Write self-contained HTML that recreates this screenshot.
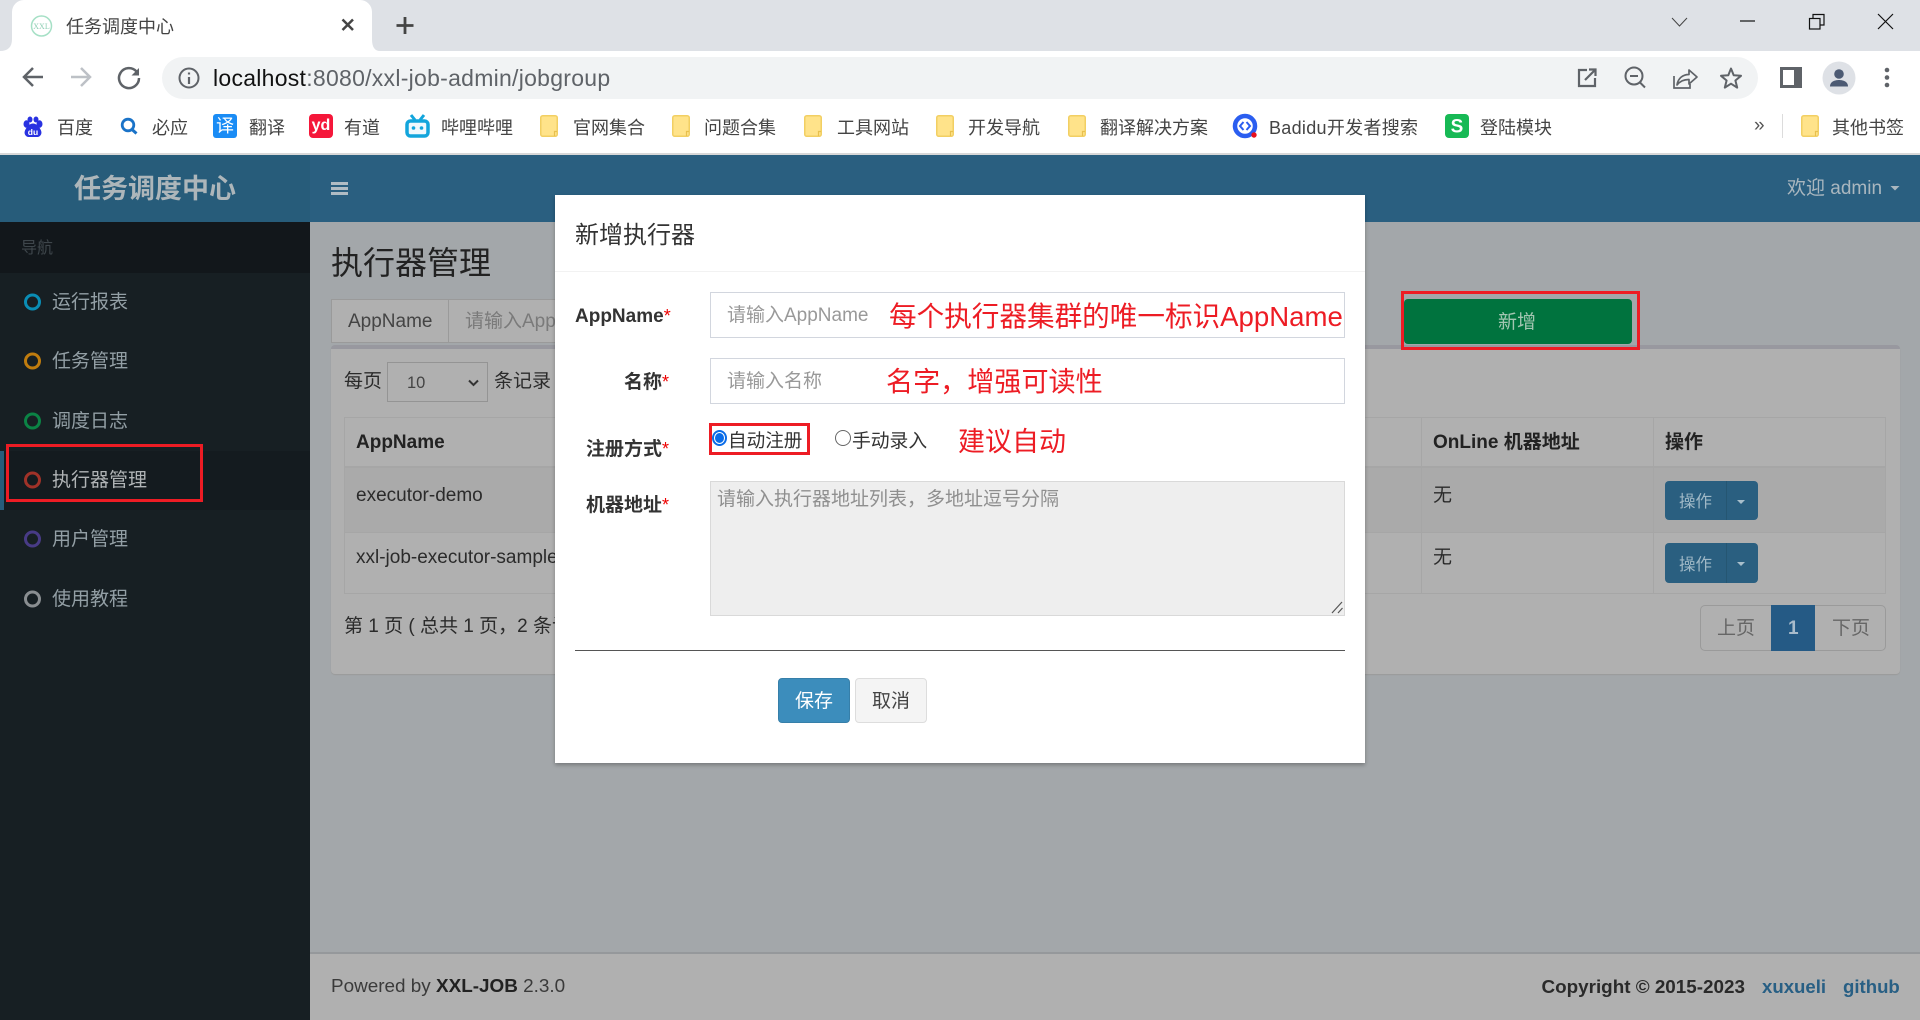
<!DOCTYPE html>
<html lang="zh-CN"><head><meta charset="utf-8"><title>任务调度中心</title>
<style>
html,body{margin:0;padding:0;width:1920px;height:1020px;overflow:hidden;background:#a3a7aa}
body{font-family:"Liberation Sans","Noto Sans CJK SC",sans-serif;position:relative}
.t{position:absolute;white-space:nowrap;line-height:30px;height:30px;font-size:19px;margin-top:1px}
.b{position:absolute;box-sizing:border-box}
.bm{color:#444;font-size:18px}
.m{color:#939fa5;font-size:19px;left:52px}
.th{font-weight:700;color:#222;font-size:19px}
.td{color:#2b2b2b;font-size:19px}
.l{font-weight:700;color:#333;font-size:19px}
.l i{color:#e00;font-style:normal;font-weight:400;font-size:18px}
.red{color:#ed1c24;font-size:27.6px;line-height:36px;height:36px}
.ph{color:#999;font-size:19px}
.rb{border:3px solid #ed1c24}
svg{position:absolute;left:0;top:0}
</style></head><body>

<!-- browser chrome -->
<div class="b" style="left:0;top:0;width:1920px;height:51px;background:#dee1e6"></div>
<div class="b" style="left:12px;top:0;width:360px;height:51px;background:#fff;border-radius:12px 12px 0 0"></div>
<svg width="400" height="60" viewBox="0 0 400 60"><path d="M0 51Q12 51 12 39V51ZM380 51Q372 51 372 39V51Z" fill="#fff"/></svg>
<div class="t" style="left:66px;top:11px;font-size:18px;color:#444">任务调度中心</div>
<div class="b" style="left:0;top:51px;width:1920px;height:103px;background:#fff"></div>
<div class="b" style="left:0;top:153px;width:1920px;height:2px;background:#d8d8d8"></div>
<div class="b" style="left:162px;top:57px;width:1596px;height:42px;background:#f1f3f4;border-radius:21px"></div>
<div class="t" style="left:213px;top:62px;font-size:23px;letter-spacing:.27px;color:#5f6368"><span style="color:#111">localhost</span>:8080/xxl-job-admin/jobgroup</div>

<div class="t bm" style="left:57px;top:112px">百度</div>
<div class="t bm" style="left:152px;top:112px">必应</div>
<div class="t bm" style="left:249px;top:112px">翻译</div>
<div class="t bm" style="left:344px;top:112px">有道</div>
<div class="t bm" style="left:441px;top:112px">哔哩哔哩</div>
<div class="t bm" style="left:573px;top:112px">官网集合</div>
<div class="t bm" style="left:704px;top:112px">问题合集</div>
<div class="t bm" style="left:837px;top:112px">工具网站</div>
<div class="t bm" style="left:968px;top:112px">开发导航</div>
<div class="t bm" style="left:1100px;top:112px">翻译解决方案</div>
<div class="t bm" style="left:1269px;top:112px;letter-spacing:.3px">Badidu开发者搜索</div>
<div class="t bm" style="left:1480px;top:112px">登陆模块</div>
<div class="t bm" style="left:1754px;top:110px;font-size:19px;color:#555">»</div>
<div class="b" style="left:1782px;top:114px;width:1px;height:24px;background:#dcdcdc"></div>
<div class="t bm" style="left:1832px;top:112px">其他书签</div>

<!-- header -->
<div class="b" style="left:0;top:155px;width:310px;height:67px;background:#275c7a"></div>
<div class="b" style="left:310px;top:155px;width:1610px;height:67px;background:#2a5f80"></div>
<div class="t" style="left:74px;top:173px;font-size:27px;font-weight:700;color:#adb6ba">任务调度中心</div>
<div class="b" style="left:331px;top:182px;width:17px;height:3px;background:#b0bcc4"></div>
<div class="b" style="left:331px;top:187px;width:17px;height:3px;background:#b0bcc4"></div>
<div class="b" style="left:331px;top:192px;width:17px;height:3px;background:#b0bcc4"></div>
<div class="t" style="left:1787px;top:173px;color:#aab7bf">欢迎 admin</div>

<!-- sidebar -->
<div class="b" style="left:0;top:222px;width:310px;height:798px;background:#171f23"></div>
<div class="b" style="left:0;top:222px;width:310px;height:51px;background:#12171b"></div>
<div class="t" style="left:21px;top:233px;font-size:16px;color:#3e464b">导航</div>
<div class="b" style="left:0;top:451px;width:310px;height:59px;background:#141b1f"></div>
<div class="b" style="left:0;top:451px;width:4px;height:59px;background:#275c7a"></div>
<div class="t m" style="top:287px">运行报表</div>
<div class="t m" style="top:346px">任务管理</div>
<div class="t m" style="top:406px">调度日志</div>
<div class="t m" style="top:465px;color:#b0b4b6">执行器管理</div>
<div class="t m" style="top:524px">用户管理</div>
<div class="t m" style="top:584px">使用教程</div>
<div class="b rb" style="left:6px;top:444px;width:197px;height:58px"></div>

<!-- content -->
<div class="t" style="left:331px;top:246px;font-size:32px;line-height:32px;color:#222">执行器管理</div>
<div class="b" style="left:331px;top:299px;width:118px;height:44px;background:#b0b0b0;border:1px solid #9a9a9a"></div>
<div class="b" style="left:448px;top:299px;width:120px;height:44px;background:#b0b0b0;border:1px solid #9a9a9a"></div>
<div class="t td" style="left:348px;top:306px;color:#444">AppName</div>
<div class="t td" style="left:465px;top:306px;color:#7a7a7a">请输入AppName</div>

<div class="b" style="left:331px;top:345px;width:1569px;height:329px;background:#b0b0b0;border-top:4px solid #98989f;border-radius:4px;box-shadow:0 1px 1px #9a9a9a"></div>
<div class="b" style="left:1404px;top:299px;width:228px;height:45px;background:#00733e;border-radius:4px"></div>
<div class="t" style="left:1498px;top:307px;color:#a3c6b2">新增</div>
<div class="b rb" style="left:1401px;top:291px;width:239px;height:59px"></div>
<div class="t td" style="left:344px;top:366px">每页</div>
<div class="b" style="left:387px;top:362px;width:101px;height:40px;border:1px solid #949494;background:#b0b0b0"></div>
<div class="t" style="left:407px;top:367px;font-size:16.5px;color:#444">10</div>
<div class="t td" style="left:494px;top:366px">条记录</div>

<div class="b" style="left:344px;top:417px;width:1542px;height:177px;border:1px solid #a6a6a6"></div>
<div class="b" style="left:345px;top:468px;width:1540px;height:64px;background:#aaaaaa"></div>
<div class="b" style="left:344px;top:466px;width:1542px;height:2px;background:#a6a6a6"></div>
<div class="b" style="left:344px;top:532px;width:1542px;height:1px;background:#a6a6a6"></div>
<div class="b" style="left:1421px;top:417px;width:1px;height:177px;background:#a6a6a6"></div>
<div class="b" style="left:1653px;top:417px;width:1px;height:177px;background:#a6a6a6"></div>
<div class="t th" style="left:356px;top:427px">AppName</div>
<div class="t th" style="left:1433px;top:427px">OnLine 机器地址</div>
<div class="t th" style="left:1665px;top:427px">操作</div>
<div class="t td" style="left:356px;top:480px">executor-demo</div>
<div class="t td" style="left:356px;top:542px">xxl-job-executor-sample</div>
<div class="t td" style="left:1433px;top:480px">无</div>
<div class="t td" style="left:1433px;top:542px">无</div>

<div class="b" style="left:1665px;top:481px;width:93px;height:39px;background:#2a5f80;border-radius:4px"></div>
<div class="b" style="left:1726px;top:481px;width:1px;height:39px;background:#255672"></div>
<div class="t" style="left:1679px;top:486px;font-size:16.5px;color:#9fb8c6">操作</div>
<div class="b" style="left:1665px;top:543px;width:93px;height:40px;background:#2a5f80;border-radius:4px"></div>
<div class="b" style="left:1726px;top:543px;width:1px;height:40px;background:#255672"></div>
<div class="t" style="left:1679px;top:549px;font-size:16.5px;color:#9fb8c6">操作</div>

<div class="t td" style="left:344px;top:611px">第 1 页 ( 总共 1 页，2 条记录 )</div>
<div class="b" style="left:1700px;top:605px;width:186px;height:46px;border:1px solid #9a9a9a;border-radius:5px"></div>
<div class="b" style="left:1771px;top:605px;width:44px;height:46px;background:#255a85"></div>
<div class="t" style="left:1717px;top:613px;color:#666">上页</div>
<div class="t" style="left:1788px;top:613px;color:#a9bccb;font-weight:700">1</div>
<div class="t" style="left:1832px;top:613px;color:#666">下页</div>

<!-- footer -->
<div class="b" style="left:310px;top:952px;width:1610px;height:68px;background:#b0b0b0;border-top:2px solid #95989b"></div>
<div class="t" style="left:331px;top:971px;font-size:18.9px;color:#3a3a3a">Powered by <b style="color:#222">XXL-JOB</b> 2.3.0</div>
<div class="t" style="left:1541.500px;top:971px;font-size:18.85px;color:#2a2a2a;font-weight:700">Copyright © 2015-2023</div>
<div class="t" style="left:1762px;top:971px;font-size:18.6px;color:#285f84;font-weight:700">xuxueli</div>
<div class="t" style="left:1843px;top:971px;font-size:18.6px;color:#285f84;font-weight:700">github</div>

<!-- icons -->
<svg width="1920" height="1020" viewBox="0 0 1920 1020" fill="none">
  <!-- favicon -->
  <circle cx="41.5" cy="26" r="10" stroke="#a6e0c6" stroke-width="1.5" fill="#fff"/>
  <text x="41.5" y="29" font-size="8" text-anchor="middle" font-family="Liberation Serif,serif" fill="#8fcfb4">XXL</text>
  <path d="M342.500 19.500L353 30M353 19.500L342.500 30" stroke="#444" stroke-width="2.500"/>
  <path d="M405 17V34M396.500 25.500H413.500" stroke="#444" stroke-width="2.800"/>
  <!-- window controls -->
  <path d="M1672 18L1679.500 26L1687 18" stroke="#444" stroke-width="1"/>
  <path d="M1740 21H1755" stroke="#111" stroke-width="1.200"/>
  <rect x="1809.500" y="18.500" width="10.500" height="10.500" stroke="#111" stroke-width="1.200"/>
  <path d="M1813 18V14.500H1824V25H1820" stroke="#111" stroke-width="1.200"/>
  <path d="M1878 14L1893 29M1893 14L1878 29" stroke="#111" stroke-width="1.200"/>
  <!-- nav -->
  <path d="M43 77H25M33 68L24 77L33 86" stroke="#5f6368" stroke-width="2.500"/>
  <path d="M71 77H89M81 68L90 77L81 86" stroke="#bdc1c6" stroke-width="2.500"/>
  <path d="M136.500 71.500A10 10 0 1 0 139 78" stroke="#5f6368" stroke-width="2.500"/>
  <path d="M139 68V75.500H131.500Z" fill="#5f6368"/>
  <circle cx="189" cy="78" r="9.500" stroke="#5f6368" stroke-width="2"/>
  <path d="M189 77V84M189 72.500V74.500" stroke="#5f6368" stroke-width="2.200"/>
  <!-- right toolbar icons -->
  <path d="M1587 70H1579V86H1595V78" stroke="#5f6368" stroke-width="2.200"/>
  <path d="M1585 80L1595 70M1589 69.500H1595.500V76" stroke="#5f6368" stroke-width="2.200"/>
  <circle cx="1634" cy="76" r="8.500" stroke="#5f6368" stroke-width="2"/>
  <path d="M1630 76H1638M1640 82.500L1645 87.500" stroke="#5f6368" stroke-width="2"/>
  <path d="M1674 76V88H1690V84" stroke="#5f6368" stroke-width="1.700"/>
  <path d="M1677 85C1678 78 1683 74.500 1689 74.500V70L1697 77L1689 84V79.500C1684 79.500 1680 81 1677 85Z" stroke="#5f6368" stroke-width="1.700" stroke-linejoin="round"/>
  <path d="M1731 68.500L1733.700 75.300L1741 75.800L1735.400 80.500L1737.200 87.600L1731 83.700L1724.800 87.600L1726.600 80.500L1721 75.800L1728.300 75.300Z" stroke="#5f6368" stroke-width="2" stroke-linejoin="round"/>
  <rect x="1780" y="67" width="22" height="21" fill="#5f6368"/>
  <rect x="1783" y="70" width="11" height="15" fill="#fff"/>
  <circle cx="1839" cy="78" r="16.500" fill="#dee1e6"/>
  <circle cx="1839" cy="74" r="4.800" fill="#4c5a73"/>
  <path d="M1830 86.500C1830 81.500 1835 80 1839 80C1843 80 1848 81.500 1848 86.500Z" fill="#4c5a73"/>
  <circle cx="1887" cy="70" r="2.300" fill="#5f6368"/><circle cx="1887" cy="77.500" r="2.300" fill="#5f6368"/><circle cx="1887" cy="85" r="2.300" fill="#5f6368"/>
  <!-- baidu -->
  <g fill="#2932e1">
    <ellipse cx="26.500" cy="124" rx="3" ry="3.800"/><ellipse cx="39.500" cy="124" rx="3" ry="3.800"/>
    <ellipse cx="30" cy="119.500" rx="2.500" ry="3"/><ellipse cx="36" cy="119.500" rx="2.500" ry="3"/>
    <path d="M33 123.500C29 123.500 26 128 25 130.500C23.500 134 26 137 29 137H37C40 137 42.500 134 41 130.500C40 128 37 123.500 33 123.500Z"/>
  </g>
  <text x="33" y="135" font-size="8.500" font-weight="700" text-anchor="middle" font-family="Liberation Sans,sans-serif" fill="#fff">du</text>
  <!-- bing search -->
  <circle cx="128" cy="125" r="5.800" stroke="#1a73c8" stroke-width="2.800"/>
  <path d="M132 129.500L136.500 133.500" stroke="#1a73c8" stroke-width="3"/>
  <!-- 译 -->
  <rect x="213" y="114" width="24" height="24" rx="3" fill="#1a8cf5"/>
  <text x="225" y="132" font-size="18" text-anchor="middle" font-family="Noto Sans CJK SC,sans-serif" fill="#fff">译</text>
  <!-- yd -->
  <rect x="309" y="114" width="24" height="24" rx="4" fill="#f5173a"/>
  <text x="321" y="130" font-size="16" text-anchor="middle" font-weight="700" font-family="Liberation Sans,sans-serif" fill="#fff">yd</text>
  <!-- bilibili -->
  <path d="M411 115L415 120M424 115L420 120" stroke="#12a5dc" stroke-width="3"/>
  <rect x="407" y="121" width="21" height="15" rx="3.500" fill="#f0f9fd" stroke="#12a5dc" stroke-width="3.500"/>
  <circle cx="413.500" cy="128" r="1.800" fill="#12a5dc"/><circle cx="421.500" cy="128" r="1.800" fill="#12a5dc"/>
  <!-- folders -->
  <g fill="#ffe38a" stroke="#f2cf63" stroke-width="1.500">
    <rect x="540.750" y="115.750" width="16.500" height="20.500" rx="2"/>
    <rect x="672.750" y="115.750" width="16.500" height="20.500" rx="2"/>
    <rect x="804.750" y="115.750" width="16.500" height="20.500" rx="2"/>
    <rect x="936.750" y="115.750" width="16.500" height="20.500" rx="2"/>
    <rect x="1068.750" y="115.750" width="16.500" height="20.500" rx="2"/>
    <rect x="1801.750" y="115.750" width="16.500" height="20.500" rx="2"/>
  </g>
  <g stroke="#e8c04e" stroke-width="1.200">
    <path d="M554.500 136V131.500H557"/><path d="M686.500 136V131.500H689"/><path d="M818.500 136V131.500H821"/><path d="M950.500 136V131.500H953"/><path d="M1082.500 136V131.500H1085"/><path d="M1815.500 136V131.500H1818"/>
  </g>
  <!-- badidu -->
  <circle cx="1245" cy="126" r="10" stroke="#2b5ef0" stroke-width="4.500"/>
  <path d="M1243.500 122L1240 126L1243.500 130M1246.500 122L1250 126L1246.500 130" stroke="#2b5ef0" stroke-width="2"/>
  <circle cx="1254" cy="135" r="2.700" fill="#e8101c"/>
  <!-- S -->
  <rect x="1445" y="114" width="24" height="24" rx="4" fill="#17b955"/>
  <text x="1457" y="132.500" font-size="19" text-anchor="middle" font-weight="700" font-family="Liberation Sans,sans-serif" fill="#fff">S</text>

  <!-- header caret -->
  <path d="M1890.500 186H1899.500L1895 190.500Z" fill="#aab7bf"/>
  <!-- sidebar rings -->
  <g stroke-width="3">
    <circle cx="32.500" cy="302" r="7" stroke="#0a8db5"/>
    <circle cx="32.500" cy="361" r="7" stroke="#c07c0e"/>
    <circle cx="32.500" cy="421" r="7" stroke="#0b8345"/>
    <circle cx="32.500" cy="480" r="7" stroke="#a03228"/>
    <circle cx="32.500" cy="539" r="7" stroke="#483b86"/>
    <circle cx="32.500" cy="599" r="7" stroke="#8a8e91"/>
  </g>
  <!-- select chevron -->
  <path d="M469 380.500L473.500 385L478 380.500" stroke="#333" stroke-width="2"/>
  <!-- op carets -->
  <path d="M1737 500H1745L1741 504Z" fill="#a9bfcc"/>
  <path d="M1737 562H1745L1741 566Z" fill="#a9bfcc"/>
</svg>

<!-- modal -->
<div class="b" style="left:555px;top:195px;width:810px;height:568px;background:#fff;box-shadow:0 2px 4px rgba(0,0,0,.28)"></div>
<div class="b" style="left:555px;top:271px;width:810px;height:1px;background:#f2f2f2"></div>
<div class="t" style="left:575px;top:220px;font-size:24px;color:#333">新增执行器</div>

<div class="t l" style="left:575px;top:300px">AppName<i>*</i></div>
<div class="b" style="left:710px;top:292px;width:635px;height:46px;border:1.500px solid #d2d6de"></div>
<div class="t ph" style="left:727px;top:300px">请输入AppName</div>
<div class="t red" style="left:889px;top:298px">每个执行器集群的唯一标识AppName</div>

<div class="t l" style="left:624px;top:366px">名称<i>*</i></div>
<div class="b" style="left:710px;top:358px;width:635px;height:46px;border:1.500px solid #d2d6de"></div>
<div class="t ph" style="left:727px;top:366px">请输入名称</div>
<div class="t red" style="left:886px;top:363px;font-size:27.1px">名字，增强可读性</div>

<div class="t l" style="left:586px;top:433px">注册方式<i>*</i></div>
<div class="b" style="left:712px;top:430px;width:15px;height:16px;border:2px solid #0a6ce8;border-radius:50%;background:#fff"></div>
<div class="b" style="left:715px;top:433px;width:9px;height:10px;border-radius:50%;background:#0a6ce8"></div>
<div class="t" style="left:728px;top:425px;font-size:18.6px;color:#333">自动注册</div>
<div class="b rb" style="left:709px;top:423px;width:101px;height:32px"></div>
<div class="b" style="left:835px;top:430px;width:16px;height:16px;border:1px solid #666;border-radius:50%"></div>
<div class="t" style="left:852px;top:425px;font-size:18.8px;color:#333">手动录入</div>
<div class="t red" style="left:958px;top:423px;font-size:27px">建议自动</div>

<div class="t l" style="left:586px;top:489px">机器地址<i>*</i></div>
<div class="b" style="left:710px;top:481px;width:635px;height:135px;background:#eee;border:1.500px solid #d9d9d9"></div>
<div class="t ph" style="left:717px;top:484px;color:#8f8f8f">请输入执行器地址列表，多地址逗号分隔</div>

<div class="b" style="left:575px;top:650px;width:770px;height:1px;background:#555"></div>
<div class="b" style="left:778px;top:678px;width:72px;height:45px;background:#3c8dbc;border-radius:4px;border:1px solid #367fa9"></div>
<div class="t" style="left:795px;top:686px;color:#fff">保存</div>
<div class="b" style="left:855px;top:678px;width:72px;height:45px;background:#f4f4f4;border-radius:4px;border:1px solid #ddd"></div>
<div class="t" style="left:872px;top:686px;color:#444">取消</div>

<svg width="1920" height="1020" viewBox="0 0 1920 1020" fill="none">
  <path d="M1332 613L1342 602M1338 613L1342.500 608" stroke="#555" stroke-width="1.200"/>
</svg>
</body></html>
